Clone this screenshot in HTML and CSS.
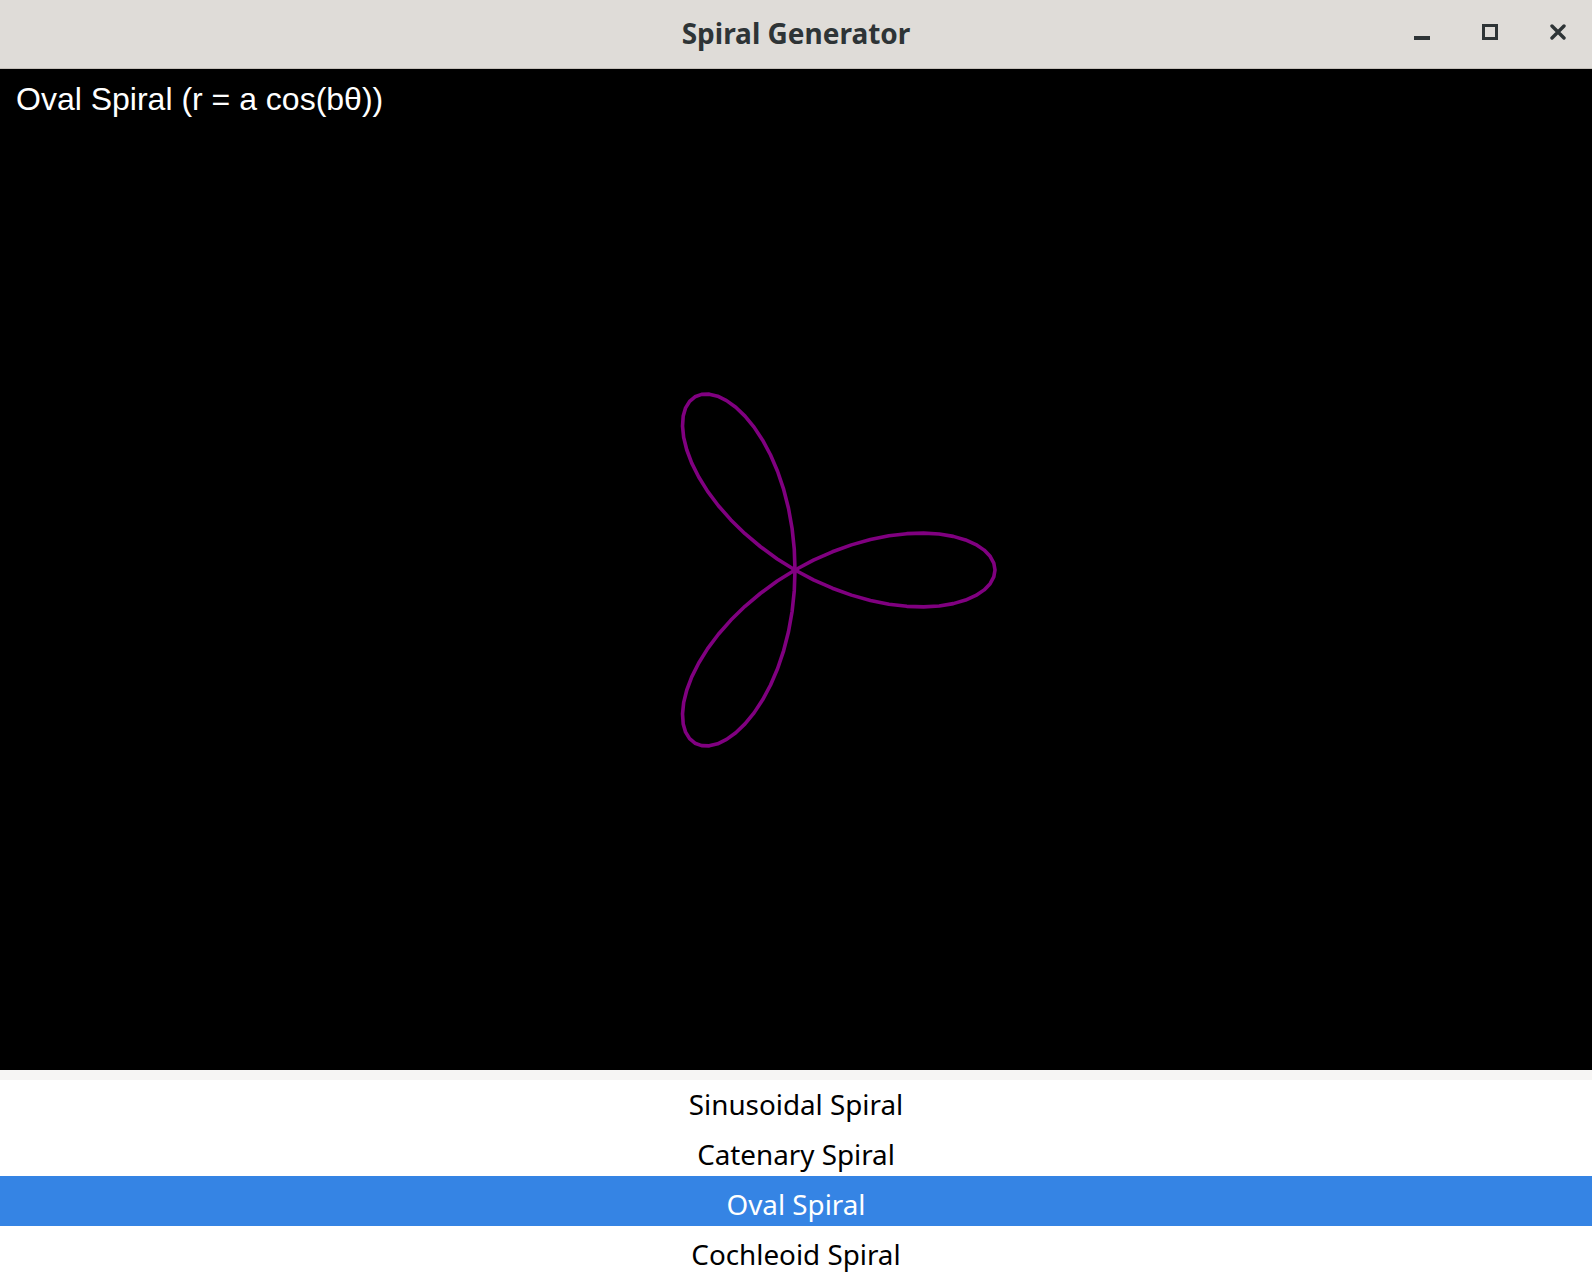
FILE: index.html
```html
<!DOCTYPE html>
<html lang="en">
<head>
<meta charset="utf-8">
<title>Spiral Generator</title>
<link rel="stylesheet" href="styles.css">
</head>
<body>
<div class="window">
  <header class="titlebar">
    <div class="titlebar-spacer"></div>
    <h1 class="title">Spiral Generator</h1>
    <div class="controls">
      <button class="ctl" aria-label="Minimize">
        <svg width="16" height="16" viewBox="0 0 16 16"><rect x="0" y="12" width="16" height="4" fill="#2e3436"/></svg>
      </button>
      <button class="ctl" aria-label="Maximize">
        <svg width="16" height="16" viewBox="0 0 16 16"><rect x="1.5" y="1.5" width="13" height="13" fill="none" stroke="#2e3436" stroke-width="3"/></svg>
      </button>
      <button class="ctl" aria-label="Close">
        <svg width="16" height="16" viewBox="0 0 16 16"><path d="M2 2 L14 14 M14 2 L2 14" stroke="#2e3436" stroke-width="3.4" stroke-linecap="round"/></svg>
      </button>
    </div>
  </header>
  <main class="canvas">
    <div class="canvas-label">Oval Spiral (r = a cos(bθ))</div>
    <svg class="plot" viewBox="-795 -501 1592 1001" preserveAspectRatio="xMidYMid meet">
      <defs>
        <path id="petal" d="M0,0 L18.46,-9.82 L37.37,-18.23 L56.46,-25.14 L75.42,-30.47 L93.97,-34.2 L111.8,-36.33 L128.64,-36.89 L144.21,-35.96 L158.27,-33.64 L170.58,-30.08 L180.93,-25.43 L189.17,-19.88 L195.15,-13.65 L198.78,-6.94 L200,0 L198.78,6.94 L195.15,13.65 L189.17,19.88 L180.93,25.43 L170.58,30.08 L158.27,33.64 L144.21,35.96 L128.64,36.89 L111.8,36.33 L93.97,34.2 L75.42,30.47 L56.46,25.14 L37.37,18.23 L18.46,9.82 Z"/>
      </defs>
      <g class="curve">
        <use href="#petal"/>
        <use href="#petal" transform="rotate(120)"/>
        <use href="#petal" transform="rotate(240)"/>
      </g>
    </svg>
  </main>
  <div class="separator"></div>
  <div class="list-viewport">
    <ul class="list">
      <li class="item">Sinusoidal Spiral</li>
      <li class="item">Catenary Spiral</li>
      <li class="item selected">Oval Spiral</li>
      <li class="item">Cochleoid Spiral</li>
    </ul>
  </div>
</div>
</body>
</html>
```
FILE: styles.css
```css
html, body {
  margin: 0;
  padding: 0;
  width: 1592px;
  height: 1276px;
  overflow: hidden;
  background: #ffffff;
}

.window {
  display: flex;
  flex-direction: column;
  width: 1592px;
  height: 1276px;
}

.titlebar {
  flex: 0 0 68px;
  display: grid;
  grid-template-columns: 1fr auto 1fr;
  align-items: center;
  background: #dfdcd8;
  border-bottom: 1px solid #c4bfb9;
}

.title {
  margin: 0;
  font-family: "Noto Sans", "Open Sans", sans-serif;
  font-weight: 700;
  font-size: 28px;
  color: #2e3436;
  line-height: 1;
  padding-bottom: 2px;
}

.controls {
  display: flex;
  justify-content: flex-end;
  align-self: stretch;
}

.ctl {
  width: 68px;
  border: 0;
  margin: 0;
  padding: 24px 0 0 0;
  background: transparent;
  display: flex;
  justify-content: center;
  align-items: flex-start;
}

.ctl svg {
  display: block;
}

.canvas {
  flex: 0 0 1001px;
  position: relative;
  background: #000000;
  overflow: hidden;
}

.canvas-label {
  position: absolute;
  left: 16px;
  top: 12px;
  font-family: "Liberation Sans", Arial, sans-serif;
  font-size: 32px;
  color: #ffffff;
  white-space: nowrap;
}

.plot {
  display: block;
  width: 100%;
  height: 100%;
}

.curve use {
  fill: none;
  stroke: #800080;
  stroke-width: 3.6;
  stroke-linejoin: round;
}

.separator {
  flex: 0 0 10px;
  background: #f6f5f4;
}

.list-viewport {
  flex: 1 1 auto;
  overflow: hidden;
  background: #ffffff;
}

.list {
  list-style: none;
  margin: -4px 0 0 0;
  padding: 0;
}

.item {
  height: 50px;
  line-height: 56px;
  text-align: center;
  font-family: "Noto Sans", "Open Sans", sans-serif;
  font-size: 27.8px;
  color: #000000;
}

.item.selected {
  background: #3584e4;
  color: #ffffff;
}
```
